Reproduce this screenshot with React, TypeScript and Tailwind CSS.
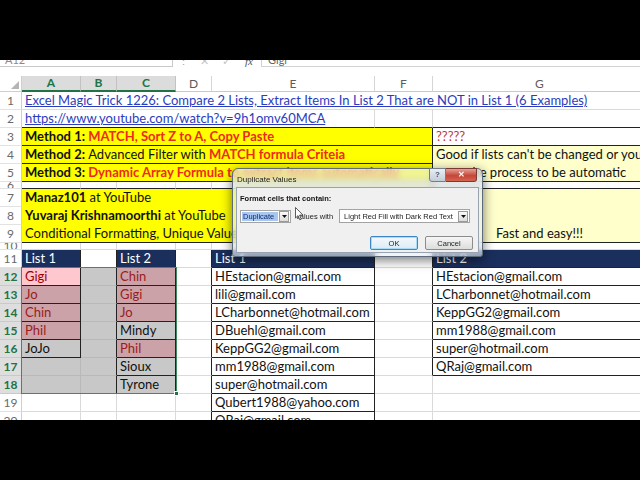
import React from "react";

// column widths (px) — row header, A..G
const RH = "w-[22px]";
const A = "w-[59px]";
const B = "w-[36px]";
const C = "w-[59px]";
const D = "w-[36px]";
const E = "w-[163px]";
const F = "w-[58px]";
const G = "w-[214px]";

const GR = "border-r-[#dadada]";
const GB = "border-b-[#dadada]";
const SR = "border-r-[#b9b9b9]"; // gridlines inside the selection
const SB = "border-b-[#b9b9b9]";
const KR = "border-r-[#222]";
const KB = "border-b-[#222]";

const SEL = "bg-[#c8c8c8]";
const SEL_DUP = "bg-[#cba2a8] text-[#9a1c1c]";
const NAVY = "bg-[#1b2f5c] text-white";
const YEL = "bg-[#ffff00]";
const LYEL = "bg-[#ffffcc]";

type CellProps = {
  w: string;
  bg?: string;
  r?: string;
  b?: string;
  cls?: string;
  children?: React.ReactNode;
};

function Cell({ w, bg = "bg-white", r = GR, b = GB, cls = "", children }: CellProps) {
  return (
    <div
      className={`${w} ${bg} ${r} ${b} ${cls} shrink-0 h-full box-border border-r border-b flex items-end px-[3px] pb-[1px] whitespace-nowrap overflow-hidden text-[13px] leading-[15px]`}
    >
      {children}
    </div>
  );
}

type RowProps = { n: number; h?: string; sel?: boolean; children?: React.ReactNode };

function Row({ n, h = "h-[18px]", sel = false, children }: RowProps) {
  return (
    <div className={`flex ${h} shrink-0`}>
      <div
        className={`${RH} shrink-0 h-full box-border border-r border-b flex items-center justify-center overflow-hidden text-[12px] leading-[14px] ${
          sel
            ? "bg-[#dedede] text-[#217346] font-bold border-r-[#9fb9a8] border-b-[#c9c9c9]"
            : "bg-white text-[#6a6a6a] border-r-[#cfcfcf] border-b-[#e2e2e2]"
        }`}
      >
        {n}
      </div>
      {children}
    </div>
  );
}

function ColHead({ w, label, sel = false }: { w: string; label: string; sel?: boolean }) {
  return (
    <div
      className={`${w} shrink-0 h-full box-border border-r flex items-center justify-center text-[12px] ${
        sel
          ? "bg-[#dcdcdc] text-[#217346] font-bold border-r-[#c2c2c2] border-b-2 border-b-[#217346]"
          : "bg-white text-[#5c5c5c] border-r-[#d5d5d5] border-b border-b-[#c9c9c9]"
      }`}
    >
      {label}
    </div>
  );
}

function FormulaStrip() {
  return (
    <div className="h-[16px] shrink-0 bg-white overflow-hidden">
      <div className="flex items-end h-[14px] -mt-[7px] text-[11px] leading-[12px] text-[#8a8a8a]">
        <div className="w-[173px] h-full box-border border-b border-r border-[#c9c9c9] pl-[5px] flex items-end">A12</div>
        <div className="w-[20px] text-center text-[#aaa]">⋮</div>
        <div className="w-[22px] text-center text-[#c4c4c4]">✕</div>
        <div className="w-[22px] text-center text-[#c4c4c4]">✓</div>
        <div className="w-[24px] text-center italic font-[Liberation_Serif,serif] text-[#555]">fx</div>
        <div className="flex-1 h-full box-border border-l border-b border-[#d2d2d2] pl-[6px] flex items-end text-[#666]">Gigi</div>
      </div>
    </div>
  );
}

function Dialog() {
  return (
    <div className="absolute left-[232px] top-[168px] w-[251px] h-[89px] box-border rounded-t-[6px] rounded-b-[3px] border border-[#5d6b7c] bg-[#e6edf5]/60 backdrop-blur-[3px] shadow-[0_3px_12px_rgba(0,0,0,0.55)] flex flex-col px-[3px] pb-[3px] font-['Liberation_Sans',Arial,sans-serif]">
      <div className="h-[18px] shrink-0 flex justify-between">
        <span className="text-[8px] leading-[8px] text-[#1a1a1a] mt-[7px] pl-[1px]">Duplicate Values</span>
        <div className="flex items-start mr-[2px] -mt-px">
          <div className="w-[17px] h-[14px] box-border border border-[#6f7d8f] rounded-bl-[3px] bg-[linear-gradient(#e9eef4,#c3ccd7)] flex items-center justify-center text-[8px] font-bold text-[#4a5566]">
            ?
          </div>
          <div className="w-[31px] h-[14px] box-border border border-l-0 border-[#7a3a34] rounded-br-[3px] bg-[linear-gradient(#e7a093,#c4463a_55%,#d4644f)] flex items-center justify-center text-[8px] font-bold text-white">
            ✕
          </div>
        </div>
      </div>
      <div className="flex-1 box-border border border-[#98a3b1] bg-[#f0f0f0] flex flex-col px-[3px] pt-[6px] pb-[2px] text-[7.5px] leading-[9px] text-[#111]">
        <div className="font-bold">Format cells that contain:</div>
        <div className="flex items-center mt-[6px]">
          <div className="w-[51px] h-[13px] box-border border border-[#a3a3a3] bg-white flex items-center p-px">
            <span className="flex-1 h-full bg-[#a9c6ee] text-[#0b2a78] pl-[1px] flex items-center">Duplicate</span>
            <span className="w-[10px] h-[11px] ml-px box-border border border-[#9a9a9a] bg-[linear-gradient(#fafafa,#dcdcdc)] flex items-center justify-center">
              <svg width="5" height="3" viewBox="0 0 5 3">
                <path d="M0 0H5L2.5 3Z" fill="#111" />
              </svg>
            </span>
          </div>
          <span className="ml-[5px] text-[#222]">values with</span>
          <div className="ml-[6px] w-[131px] h-[14px] box-border border border-[#a3a3a3] bg-white flex items-center p-px">
            <span className="flex-1 pl-[3px] text-[#222]">Light Red Fill with Dark Red Text</span>
            <span className="w-[10px] h-[11px] box-border border border-[#9a9a9a] bg-[linear-gradient(#fafafa,#dcdcdc)] flex items-center justify-center">
              <svg width="5" height="3" viewBox="0 0 5 3">
                <path d="M0 0H5L2.5 3Z" fill="#111" />
              </svg>
            </span>
          </div>
        </div>
        <div className="mt-auto flex justify-end gap-[7px] pr-[2px]">
          <div className="w-[48px] h-[14px] box-border rounded-[2px] border border-[#3d86c6] shadow-[inset_0_0_0_1px_#a6dcf6] bg-[linear-gradient(#f4f9fd,#dcebf6)] flex items-center justify-center text-[#222]">
            OK
          </div>
          <div className="w-[48px] h-[14px] box-border rounded-[2px] border border-[#8c8c8c] bg-[linear-gradient(#f6f6f6,#dddddd)] flex items-center justify-center text-[#222]">
            Cancel
          </div>
        </div>
      </div>
    </div>
  );
}

function Cursor() {
  return (
    <svg className="absolute left-[295px] top-[207px]" width="9" height="14" viewBox="0 0 9 14">
      <path d="M0.5 0.5V11L3 8.6L4.8 12.8L6.3 12.1L4.6 8.1H8Z" fill="#fff" stroke="#333" strokeWidth="0.8" strokeLinejoin="round" />
    </svg>
  );
}

const B1 = "font-bold";
const RED = "font-bold text-[#ee2a1c]";

export default function App() {
  return (
    <div className="relative w-[640px] h-[480px] overflow-hidden bg-black flex flex-col font-[Lato,'Open_Sans',sans-serif] text-[#111]">
      <div className="h-[60px] shrink-0 bg-black" />
      <FormulaStrip />

      <div className="relative flex-1 overflow-hidden bg-white flex flex-col">
        {/* column headers */}
        <div className="flex h-[16px] shrink-0">
          <div className={`${RH} shrink-0 h-full box-border border-r border-b border-[#cfcfcf] bg-white flex items-end justify-end p-[2px]`}>
            <svg width="8" height="8" viewBox="0 0 8 8">
              <path d="M8 0V8H0Z" fill="#b5b5b5" />
            </svg>
          </div>
          <ColHead w={A} label="A" sel />
          <ColHead w={B} label="B" sel />
          <ColHead w={C} label="C" sel />
          <ColHead w={D} label="D" />
          <ColHead w={E} label="E" />
          <ColHead w={F} label="F" />
          <ColHead w={G} label="G" />
        </div>

        <Row n={1}>
          <Cell w="w-[625px]">
            <span className="text-[#2b3cbf] underline">
              Excel Magic Trick 1226: Compare 2 Lists, Extract Items In List 2 That are NOT in List 1 (6 Examples)
            </span>
          </Cell>
        </Row>
        <Row n={2}>
          <Cell w="w-[353px]" b={KB}>
            <span className="text-[#2b3cbf] underline">https://www.youtube.com/watch?v=9h1omv60MCA</span>
          </Cell>
          <Cell w={F} b={KB} />
          <Cell w={G} b={KB} />
        </Row>
        <Row n={3}>
          <Cell w="w-[411px]" bg={YEL} r={KR} b={KB}>
            <span className={B1}>Method 1:&nbsp;</span>
            <span className={RED}>MATCH, Sort Z to A, Copy Paste</span>
          </Cell>
          <Cell w={G} b={KB}>
            <span className="text-[#c0392b]">?????</span>
          </Cell>
        </Row>
        <Row n={4}>
          <Cell w="w-[411px]" bg={YEL} r={KR} b={KB}>
            <span className={B1}>Method 2:&nbsp;</span>
            <span>Advanced Filter with&nbsp;</span>
            <span className={RED}>MATCH formula Criteia</span>
          </Cell>
          <Cell w={G} bg={LYEL} b="border-b-[#ffffcc]">
            Good if lists can't be changed or you
          </Cell>
        </Row>
        <Row n={5}>
          <Cell w="w-[411px]" bg={YEL} r={KR} b={KB}>
            <span className={B1}>Method 3:&nbsp;</span>
            <span className={RED}>Dynamic Array Formula to extract items automatically</span>
          </Cell>
          <Cell w={G} bg={LYEL} b={KB}>
            want the process to be automatic
          </Cell>
        </Row>
        <Row n={6} h="h-[7px]">
          <Cell w={A} b={KB} />
          <Cell w={B} b={KB} />
          <Cell w={C} b={KB} />
          <Cell w={D} b={KB} />
          <Cell w={E} b={KB} />
          <Cell w={F} r={KR} b={KB} />
          <Cell w={G} b={KB} />
        </Row>
        <Row n={7}>
          <Cell w="w-[411px]" bg={YEL} r={KR} b="border-b-[#ffff00]">
            <span className={B1}>Manaz101</span>
            <span>&nbsp;at YouTube</span>
          </Cell>
          <Cell w={G} bg={LYEL} b="border-b-[#ffffcc]" />
        </Row>
        <Row n={8}>
          <Cell w="w-[411px]" bg={YEL} r={KR} b="border-b-[#ffff00]">
            <span className={B1}>Yuvaraj Krishnamoorthi</span>
            <span>&nbsp;at YouTube</span>
          </Cell>
          <Cell w={G} bg={LYEL} b="border-b-[#ffffcc]" />
        </Row>
        <Row n={9}>
          <Cell w="w-[411px]" bg={YEL} r={KR} b={KB}>
            Conditional Formatting, Unique Values
          </Cell>
          <Cell w={G} bg={LYEL} b={KB} cls="justify-center">
            Fast and easy!!!
          </Cell>
        </Row>
        <Row n={10} h="h-[7px]">
          <Cell w={A} />
          <Cell w={B} />
          <Cell w={C} />
          <Cell w={D} />
          <Cell w={E} />
          <Cell w={F} />
          <Cell w={G} />
        </Row>
        <Row n={11}>
          <Cell w={A} bg={NAVY} r={KR} b={KB}>List 1</Cell>
          <Cell w={B} r={KR} />
          <Cell w={C} bg={NAVY} r={KR} b={KB}>List 2</Cell>
          <Cell w={D} r={KR} />
          <Cell w={E} bg={NAVY} r={KR} b={KB}>List 1</Cell>
          <Cell w={F} r={KR} />
          <Cell w={G} bg={NAVY} b={KB}>List 2</Cell>
        </Row>

        <Row n={12} sel>
          <Cell w={A} bg="bg-[#ffc7ce] text-[#9c0006]" r={KR} b={KB}>Gigi</Cell>
          <Cell w={B} bg={SEL} r={KR} b={SB} />
          <Cell w={C} bg={SEL_DUP} r={KR} b={KB}>Chin</Cell>
          <Cell w={D} r={KR} />
          <Cell w={E} r={KR} b={KB}>HEstacion@gmail.com</Cell>
          <Cell w={F} r={KR} />
          <Cell w={G} b={KB}>HEstacion@gmail.com</Cell>
        </Row>
        <Row n={13} sel>
          <Cell w={A} bg={SEL_DUP} r={KR} b={KB}>Jo</Cell>
          <Cell w={B} bg={SEL} r={KR} b={SB} />
          <Cell w={C} bg={SEL_DUP} r={KR} b={KB}>Gigi</Cell>
          <Cell w={D} r={KR} />
          <Cell w={E} r={KR} b={KB}>lili@gmail.com</Cell>
          <Cell w={F} r={KR} />
          <Cell w={G} b={KB}>LCharbonnet@hotmail.com</Cell>
        </Row>
        <Row n={14} sel>
          <Cell w={A} bg={SEL_DUP} r={KR} b={KB}>Chin</Cell>
          <Cell w={B} bg={SEL} r={KR} b={SB} />
          <Cell w={C} bg={SEL_DUP} r={KR} b={KB}>Jo</Cell>
          <Cell w={D} r={KR} />
          <Cell w={E} r={KR} b={KB}>LCharbonnet@hotmail.com</Cell>
          <Cell w={F} r={KR} />
          <Cell w={G} b={KB}>KeppGG2@gmail.com</Cell>
        </Row>
        <Row n={15} sel>
          <Cell w={A} bg={SEL_DUP} r={KR} b={KB}>Phil</Cell>
          <Cell w={B} bg={SEL} r={KR} b={SB} />
          <Cell w={C} bg={SEL} r={KR} b={KB}>Mindy</Cell>
          <Cell w={D} r={KR} />
          <Cell w={E} r={KR} b={KB}>DBuehl@gmail.com</Cell>
          <Cell w={F} r={KR} />
          <Cell w={G} b={KB}>mm1988@gmail.com</Cell>
        </Row>
        <Row n={16} sel>
          <Cell w={A} bg={SEL} r={KR} b={KB}>JoJo</Cell>
          <Cell w={B} bg={SEL} r={KR} b={SB} />
          <Cell w={C} bg={SEL_DUP} r={KR} b={KB}>Phil</Cell>
          <Cell w={D} r={KR} />
          <Cell w={E} r={KR} b={KB}>KeppGG2@gmail.com</Cell>
          <Cell w={F} r={KR} />
          <Cell w={G} b={KB}>super@hotmail.com</Cell>
        </Row>
        <Row n={17} sel>
          <Cell w={A} bg={SEL} r={SR} b={SB} />
          <Cell w={B} bg={SEL} r={KR} b={SB} />
          <Cell w={C} bg={SEL} r={KR} b={KB}>Sioux</Cell>
          <Cell w={D} r={KR} />
          <Cell w={E} r={KR} b={KB}>mm1988@gmail.com</Cell>
          <Cell w={F} r={KR} />
          <Cell w={G} b={KB}>QRaj@gmail.com</Cell>
        </Row>
        <Row n={18} sel>
          <Cell w={A} bg={SEL} r={SR} b={SB} />
          <Cell w={B} bg={SEL} r={KR} b={SB} />
          <Cell w={C} bg={SEL} r={KR} b={KB}>Tyrone</Cell>
          <Cell w={D} r={KR} />
          <Cell w={E} r={KR} b={KB}>super@hotmail.com</Cell>
          <Cell w={F} />
          <Cell w={G} />
        </Row>
        <Row n={19}>
          <Cell w={A} />
          <Cell w={B} />
          <Cell w={C} />
          <Cell w={D} r={KR} />
          <Cell w={E} r={KR} b={KB}>Qubert1988@yahoo.com</Cell>
          <Cell w={F} />
          <Cell w={G} />
        </Row>
        <Row n={20}>
          <Cell w={A} />
          <Cell w={B} />
          <Cell w={C} />
          <Cell w={D} r={KR} />
          <Cell w={E} r={KR} b={KB}>QRaj@gmail.com</Cell>
          <Cell w={F} />
          <Cell w={G} />
        </Row>

        {/* selection outline A12:C18 */}
        <div className="absolute left-[21px] top-[191px] w-[156px] h-[127px] box-border border border-[#3f8a5e] pointer-events-none">
          <div className="absolute -right-[3px] -bottom-[3px] w-[5px] h-[5px] bg-[#217346] border border-white" />
        </div>
      </div>

      <div className="h-[60px] shrink-0 bg-black" />

      <Dialog />
      <Cursor />
    </div>
  );
}
